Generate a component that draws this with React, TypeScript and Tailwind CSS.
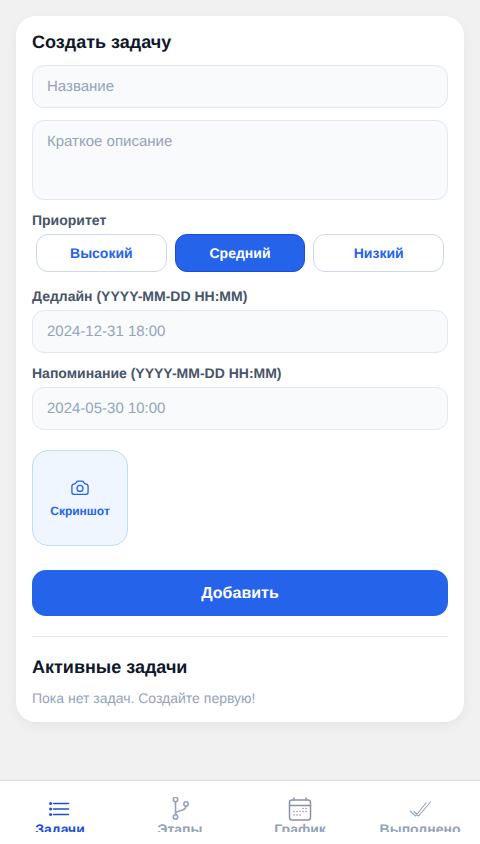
import React from "react";

function Tab({ label, active, children }: { label: string; active?: boolean; children: React.ReactNode }) {
  return (
    <div className="flex-1 flex flex-col items-center pt-[16px] h-[51px] overflow-hidden">
      <div className="h-[24px] w-[24px] flex items-center justify-center">{children}</div>
      <span className={`text-[14px] leading-[16px] font-bold ${active ? "text-[#1d4ed8]" : "text-[#94a3b8]"}`}>{label}</span>
    </div>
  );
}

const inputCls =
  "w-full h-[43px] rounded-[12px] border border-[#e2e8f0] bg-[#f8fafc] px-[14px] pt-[1px] text-[15px] text-[#94a3b8] flex items-center";

function PriorityBtn({ label, active }: { label: string; active?: boolean }) {
  return (
    <div
      className={`flex-1 h-[38px] rounded-[12px] border flex items-center justify-center text-[14px] font-bold ${
        active ? "bg-[#2563eb] border-[#1d4ed8] text-white" : "bg-white border-[#cdd8ec] text-[#2563eb]"
      }`}
    >
      {label}
    </div>
  );
}

export default function App() {
  return (
    <div className="w-[480px] h-[844px] bg-[#f1f1f1] flex flex-col overflow-hidden font-['Liberation_Sans',sans-serif] [text-rendering:geometricPrecision]">
      <div className="flex-1 px-4 pt-4">
        <div className="bg-white rounded-[20px] px-4 pt-[14px] pb-[15px] shadow-[0_4px_12px_rgba(0,0,0,0.05)]">
          <h1 className="text-[18px] leading-[24px] font-bold text-[#0f172a]">Создать задачу</h1>
          <div className={`${inputCls} mt-[11px]`}>Название</div>
          <div className="w-full h-[80px] mt-[12px] rounded-[12px] border border-[#e2e8f0] bg-[#f8fafc] px-[14px] pt-[12px] text-[15px] leading-[18px] text-[#94a3b8]">
            Краткое описание
          </div>
          <div className="mt-[12px] text-[14px] leading-[16px] font-bold text-[#475569]">Приоритет</div>
          <div className="flex gap-2 px-1 mt-[6px]">
            <PriorityBtn label="Высокий" />
            <PriorityBtn label="Средний" active />
            <PriorityBtn label="Низкий" />
          </div>
          <div className="mt-[16px] text-[14px] leading-[16px] font-bold text-[#475569]">Дедлайн (YYYY-MM-DD HH:MM)</div>
          <div className={`${inputCls} mt-[6px]`}>2024-12-31 18:00</div>
          <div className="mt-[12px] text-[14px] leading-[16px] font-bold text-[#475569]">Напоминание (YYYY-MM-DD HH:MM)</div>
          <div className={`${inputCls} mt-[6px]`}>2024-05-30 10:00</div>
          <div className="mt-[20px] w-[96px] h-[96px] rounded-[16px] border border-[#bfdbfe] bg-[#eff6ff] flex flex-col items-center justify-center">
            <svg width="20" height="20" viewBox="0 0 24 24" fill="none" stroke="#2563eb" strokeWidth="1.6" strokeLinecap="round" strokeLinejoin="round">
              <path d="M6.8 6.2 7.9 4.6a1.9 1.9 0 0 1 1.6-.8h5a1.9 1.9 0 0 1 1.6.8l1.1 1.6c.3.5.8.8 1.4.9 2 .3 3.1 1.1 3.1 3v7.1a2.5 2.5 0 0 1-2.5 2.5H4.8a2.5 2.5 0 0 1-2.5-2.5V10c0-1.9 1.1-2.7 3.1-2.9.6-.1 1.1-.4 1.4-.9Z" />
              <circle cx="12" cy="12.5" r="3.6" />
            </svg>
            <span className="mt-[5px] text-[12px] leading-[16px] font-bold text-[#2563eb]">Скриншот</span>
          </div>
          <div className="mt-[24px] h-[46px] rounded-[14px] bg-[#2563eb] pt-[1px] flex items-center justify-center text-[16px] font-bold text-white">
            Добавить
          </div>
          <div className="mt-[20px] h-px bg-[#e2e8f0]" />
          <h2 className="mt-[18px] text-[18px] leading-[24px] font-bold text-[#0f172a]">Активные задачи</h2>
          <p className="mt-[10px] text-[14px] leading-[18px] text-[#94a3b8]">Пока нет задач. Создайте первую!</p>
        </div>
      </div>
      <div className="h-[64px] bg-white border-t border-[#d9d9d9] flex items-start">
        <Tab label="Задачи" active>
          <svg width="24" height="24" viewBox="0 0 24 24" fill="none" stroke="#1d4ed8" strokeWidth="1.6" strokeLinecap="round" strokeLinejoin="round">
            <path d="M5.5 6.5h15M5.5 12h15M5.5 17.5h15" />
            <circle cx="2.6" cy="6.5" r="0.7" />
            <circle cx="2.6" cy="12" r="0.7" />
            <circle cx="2.6" cy="17.5" r="0.7" />
          </svg>
        </Tab>
        <Tab label="Этапы">
          <svg width="24" height="24" viewBox="0 0 24 24" fill="none" stroke="#94a3b8" strokeWidth="1.6" strokeLinecap="round" strokeLinejoin="round">
            <circle cx="7.5" cy="2.5" r="2.2" />
            <circle cx="7.5" cy="20" r="2.2" />
            <circle cx="18" cy="7" r="2.2" />
            <path d="M7.5 4.7v13M7.5 17c.4-1.6 1.6-2.4 3-2.8l3.6-1c2-.6 3.7-1.6 3.9-4" />
          </svg>
        </Tab>
        <Tab label="График">
          <svg width="24" height="24" viewBox="0 0 24 24" fill="none" stroke="#8794a8" strokeWidth="1.5" strokeLinecap="round" strokeLinejoin="round">
            <rect x="1.5" y="3" width="21" height="20" rx="2.5" />
            <path d="M1.5 8.5h21M6 1v2M18 1v2" />
            <path strokeWidth="1.5" strokeDasharray="0.1 2.9" d="M15 11.5h5M6 14.5h14M6 18h9" />
          </svg>
        </Tab>
        <Tab label="Выполнено">
          <svg width="24" height="24" viewBox="0 0 24 24" fill="none" stroke="#94a3b8" strokeWidth="1.1" strokeLinecap="round" strokeLinejoin="round">
            <path d="M2 14l5.5 5 L18 6M6 14.5l4.5 4.5L22.5 5" />
          </svg>
        </Tab>
      </div>
    </div>
  );
}
